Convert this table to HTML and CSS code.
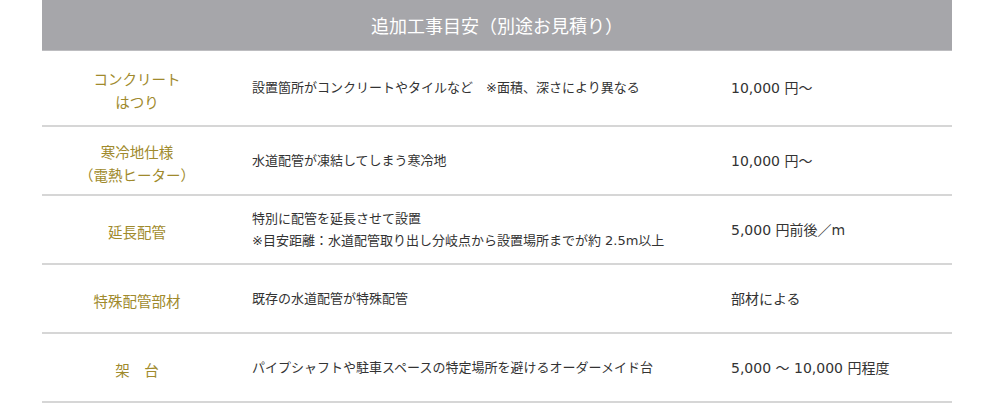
FILE: index.html
```html
<!DOCTYPE html>
<html lang="ja">
<head>
<meta charset="utf-8">
<link rel="stylesheet" href="styles.css">
</head>
<body>
<div class="table">
  <div class="head">追加工事目安（別途お見積り）</div>
  <div class="row first">
    <div class="name">コンクリート<br>はつり</div>
    <div class="desc">設置箇所がコンクリートやタイルなど　※面積、深さにより異なる</div>
    <div class="price">10,000 円～</div>
  </div>
  <div class="row">
    <div class="name">寒冷地仕様<br>（電熱ヒーター）</div>
    <div class="desc">水道配管が凍結してしまう寒冷地</div>
    <div class="price">10,000 円～</div>
  </div>
  <div class="row">
    <div class="name">延長配管</div>
    <div class="desc">特別に配管を延長させて設置<br>※目安距離：水道配管取り出し分岐点から設置場所までが約 2.5m以上</div>
    <div class="price">5,000 円前後／m</div>
  </div>
  <div class="row">
    <div class="name">特殊配管部材</div>
    <div class="desc">既存の水道配管が特殊配管</div>
    <div class="price">部材による</div>
  </div>
  <div class="row">
    <div class="name">架　台</div>
    <div class="desc">パイプシャフトや駐車スペースの特定場所を避けるオーダーメイド台</div>
    <div class="price">5,000 ～ 10,000 円程度</div>
  </div>
</div>
</body>
</html>
```

FILE: styles.css
```css
html, body {
  margin: 0;
  padding: 0;
  background: #fff;
}
body {
  font-family: "DejaVu Sans", "Noto Sans CJK JP", sans-serif;
  color: #333;
}
.table {
  width: 910px;
  margin-left: 42px;
}
.head {
  height: 50px;
  background: #a6a6aa;
  border-bottom: 1px solid #bdbdc0;
  color: #fff;
  font-family: "Noto Sans CJK JP", sans-serif;
  font-size: 18px;
  display: flex;
  align-items: center;
  justify-content: center;
}
.row {
  display: grid;
  grid-template-columns: 190px 479px 1fr;
  align-items: center;
  min-height: 67px;
  border-bottom: 2px solid #d6d6d6;
}
.row.first {
  min-height: 74px;
}
.name {
  text-align: center;
  color: #a08a2c;
  font-family: "Noto Sans CJK JP", sans-serif;
  font-size: 14.5px;
  line-height: 23px;
  padding-top: 4px;
}
.desc {
  padding-left: 20px;
  font-size: 13px;
  line-height: 22px;
  font-family: "DejaVu Sans", "Noto Sans CJK JP", sans-serif;
}
.price {
  padding-left: 20px;
  font-size: 14px;
  line-height: 22px;
}
```
